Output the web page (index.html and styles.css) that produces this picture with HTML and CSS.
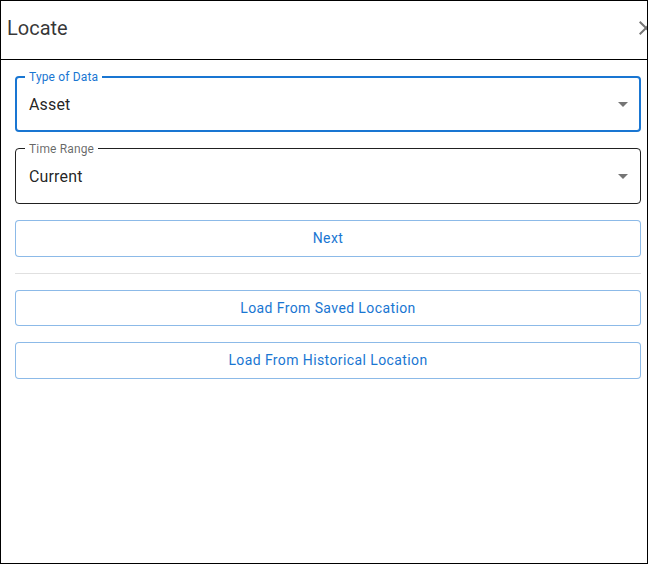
FILE: index.html
```html
<!DOCTYPE html>
<html lang="en">
<head>
<meta charset="utf-8">
<title>Locate</title>
<link rel="stylesheet" href="styles.css">
</head>
<body>
<div class="dialog">
  <header class="dialog-header">
    <h2 class="dialog-title">Locate</h2>
    <button class="close-btn" aria-label="close">
      <svg viewBox="0 0 24 24" width="24" height="24"><path d="M19 6.41 17.59 5 12 10.59 6.41 5 5 6.41 10.59 12 5 17.59 6.41 19 12 13.41 17.59 19 19 17.59 13.41 12z"/></svg>
    </button>
  </header>
  <div class="dialog-content">
    <div class="field field-focused">
      <span class="field-label">Type of Data</span>
      <span class="field-value">Asset</span>
      <svg class="field-arrow" viewBox="0 0 24 24" width="24" height="24"><path d="M7 10l5 5 5-5z"/></svg>
    </div>
    <div class="field field-hover">
      <span class="field-label">Time Range</span>
      <span class="field-value">Current</span>
      <svg class="field-arrow" viewBox="0 0 24 24" width="24" height="24"><path d="M7 10l5 5 5-5z"/></svg>
    </div>
    <button class="btn-outlined">Next</button>
    <hr class="divider">
    <div class="btn-stack">
      <button class="btn-outlined">Load From Saved Location</button>
      <button class="btn-outlined">Load From Historical Location</button>
    </div>
  </div>
</div>
</body>
</html>
```

FILE: styles.css
```css
* { box-sizing: border-box; }
html, body { margin: 0; padding: 0; background: #fff; }
body { font-family: Roboto, "Noto Sans", Arial, sans-serif; }

.dialog {
  width: 648px;
  height: 564px;
  border: 1px solid #000;
  overflow: hidden;
  background: #fff;
}

.dialog-header {
  display: flex;
  align-items: flex-start;
  height: 59px;
  padding: 11px 0 0 6px;
  border-bottom: 1px solid #000;
}
.dialog-title {
  margin: 0;
  font-size: 20px;
  font-weight: 400;
  line-height: 32px;
  color: rgba(0,0,0,0.8);
}
.close-btn {
  margin: 4px -11px 0 auto;
  padding: 0;
  border: 0;
  background: none;
  width: 24px;
  height: 24px;
  flex: none;
}
.close-btn svg { display: block; fill: rgba(0,0,0,0.54); }

.dialog-content {
  display: flex;
  flex-direction: column;
  gap: 16px;
  padding: 16px 6px 0 14px;
}

.field {
  position: relative;
  display: flex;
  align-items: center;
  height: 56px;
  border: 1px solid rgba(0,0,0,0.87);
  border-radius: 4px;
  padding: 0 5px 0 13px;
}
.field-focused {
  border: 2px solid #1976d2;
  padding: 0 4px 0 12px;
}
.field-label {
  position: absolute;
  top: -7.5px;
  left: 9px;
  padding: 0 4px;
  background: #fff;
  font-size: 12px;
  line-height: 14px;
  letter-spacing: 0.15px;
  color: rgba(0,0,0,0.6);
}
.field-focused .field-label {
  top: -8.5px;
  left: 8px;
  color: #1976d2;
}
.field-value {
  flex: 1;
  font-size: 16px;
  line-height: 23px;
  letter-spacing: 0.15px;
  color: rgba(0,0,0,0.87);
}
.field-arrow { flex: none; fill: rgba(0,0,0,0.54); }

.btn-outlined {
  display: block;
  width: 100%;
  height: 36.5px;
  padding: 5px 15px;
  border: 1px solid rgba(25,118,210,0.5);
  border-radius: 4px;
  background: #fff;
  font-family: Roboto, "Noto Sans", Arial, sans-serif;
  font-size: 14px;
  font-weight: 400;
  line-height: 24.5px;
  letter-spacing: 0.02857em;
  color: #1976d2;
}

.divider {
  margin: 0;
  border: 0;
  border-top: 1px solid #e0e0e0;
}

.btn-stack {
  display: flex;
  flex-direction: column;
  gap: 16px;
}
```
